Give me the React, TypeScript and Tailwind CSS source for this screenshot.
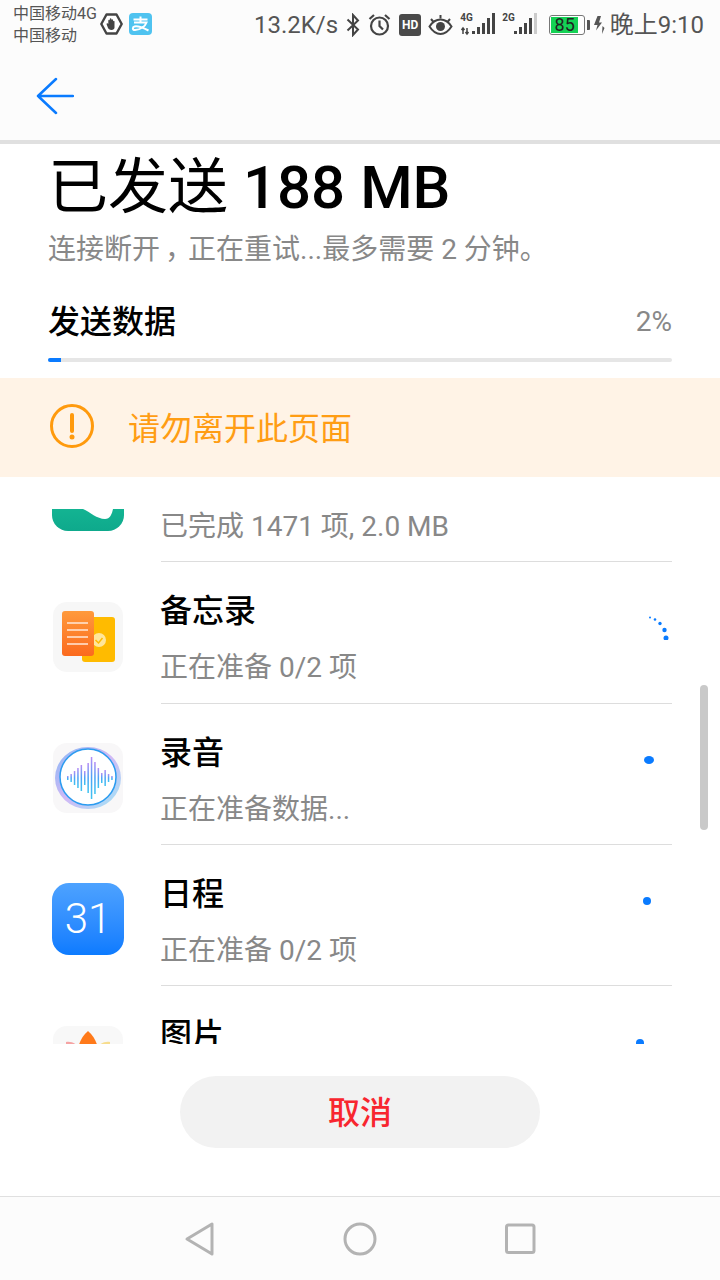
import React from "react";

const FONT = "font-['Roboto','Noto_Sans_CJK_SC',sans-serif]";

function HandBadge() {
  return (
    <svg width="23" height="22" viewBox="0 0 23 22" className="shrink-0">
      <path d="M6.500 1.500h10l5.200 9.500-5.200 9.500h-10L1.300 11z" fill="#fff" stroke="#444" strokeWidth="2.400" strokeLinejoin="round" />
      <path d="M6.500 11c0-1 1.600-1 1.800 0V7.500c0-1 1.500-1 1.500 0V6c0-1 1.600-1 1.600 0v1c0-1 1.600-1 1.600 0v1.500c0-1 1.500-1 1.500 0v6c0 1.500-1.200 2.500-3 2.500-2 0-3.200-1-3.700-2.500z" fill="#444" />
    </svg>
  );
}

function Alipay() {
  return (
    <svg width="23" height="22" viewBox="0 0 23 22" className="shrink-0">
      <rect width="23" height="22" rx="4" fill="#4fc3f0" />
      <path d="M11.500 3.500v5M4.500 6.500h14M5 9.500h12.500c-1.500 4-5 7-11.500 7.500-3 .2-2.500-3-.5-3.500 4-1 9 1.500 14 4" fill="none" stroke="#fff" strokeWidth="2" />
    </svg>
  );
}

function Bluetooth() {
  return (
    <svg width="14" height="24" viewBox="0 0 14 24" className="shrink-0">
      <path d="M1.500 6.500 12 16.500 7 22V2l5 5.500L1.500 17.500" fill="none" stroke="#444" strokeWidth="2" />
    </svg>
  );
}

function Alarm() {
  return (
    <svg width="23" height="24" viewBox="0 0 23 24" className="shrink-0">
      <circle cx="11.500" cy="13" r="8.500" fill="none" stroke="#444" strokeWidth="2.200" />
      <path d="M11.500 7.500V13l3.500 3.500M1.500 6 6 2M21.500 6 17 2" fill="none" stroke="#444" strokeWidth="2.200" />
    </svg>
  );
}

function HdBadge() {
  return (
    <div className="w-[22px] h-[22px] rounded-[3px] bg-[#4a4a4a] flex items-center justify-center text-white text-[12px] leading-none font-bold shrink-0">
      HD
    </div>
  );
}

function Eye() {
  return (
    <svg width="25" height="22" viewBox="0 0 25 22" className="shrink-0">
      <path d="M1.500 12.500C5 7 9 5.500 12.500 5.500S20 7 23.500 12.500C20 18 16 20 12.500 20S5 18 1.500 12.500z" fill="none" stroke="#444" strokeWidth="2" />
      <circle cx="12.500" cy="12.500" r="4.500" fill="#444" />
      <path d="M3 5l2.500 3M12.500 1v3.500M22 5l-2.500 3" stroke="#444" strokeWidth="2" />
    </svg>
  );
}

function Signal({ label, arrows, dim }: { label: string; arrows?: boolean; dim?: boolean }) {
  const bars = [3, 7, 11, 16, 21];
  return (
    <div className="relative w-[36px] h-[24px] shrink-0">
      <svg width="36" height="24" viewBox="0 0 36 24" className="absolute inset-0">
        {bars.map((h, i) => (
          <rect key={i} x={12 + i * 5} y={21 - h} width="3" height={h} fill={dim && i === 4 ? "#cccccc" : "#444"} />
        ))}
        {arrows && <path d="M3 15v6M1.500 17 3 15l1.500 2M7 15v6M5.500 19 7 21l1.500-2" fill="none" stroke="#444" strokeWidth="1.500" />}
      </svg>
      <span className="absolute left-0 top-0 text-[10px] leading-[10px] font-bold text-[#444]">{label}</span>
    </div>
  );
}

function Battery() {
  return (
    <div className="flex items-center gap-[2px] shrink-0">
      <div className="w-[36px] h-[20px] rounded-[3px] border border-[#777] p-[1px] bg-white">
        <div className="w-[27px] h-full bg-[#14d255] text-center text-[18px] leading-[16px] text-[#222]">85</div>
      </div>
      <div className="w-[3px] h-[10px] rounded-r-[1px] bg-[#555]" />
    </div>
  );
}

function Bolt() {
  return (
    <svg width="12" height="20" viewBox="0 0 12 20" className="shrink-0">
      <path d="M4.500 1 1 10h3.500L3 15.500 9 7.500H6L8 1z" fill="#555" />
      <path d="M9.500 11 9 19l2.500-6z" fill="#555" />
    </svg>
  );
}

function StatusBar() {
  return (
    <div className="h-[50px] pl-[13px] pr-[16px] flex items-center text-[#555]">
      <div className="w-[87px] text-[16px] leading-[22px] shrink-0 whitespace-nowrap">
        <div>中国移动4G</div>
        <div>中国移动</div>
      </div>
      <div className="flex items-center gap-[6px] -mt-[2px]">
        <HandBadge />
        <Alipay />
      </div>
      <span className="ml-[102px] text-[24px] leading-none">13.2K/s</span>
      <div className="ml-[8px] flex items-center">
        <Bluetooth />
        <div className="ml-[8px]"><Alarm /></div>
        <div className="ml-[8px]"><HdBadge /></div>
        <div className="ml-[7px]"><Eye /></div>
        <div className="ml-[7px]"><Signal label="4G" arrows /></div>
        <div className="ml-[6px]"><Signal label="2G" dim /></div>
        <div className="ml-[11px]"><Battery /></div>
        <div className="ml-[3px]"><Bolt /></div>
      </div>
      <span className="ml-auto text-[24px] leading-none">晚上9:10</span>
    </div>
  );
}

function MemoIcon() {
  return (
    <svg width="72" height="72" viewBox="0 0 72 72">
      <defs>
        <linearGradient id="memo" x1="0" y1="0" x2="0" y2="1">
          <stop offset="0" stopColor="#ff9a3c" />
          <stop offset="1" stopColor="#fb6a1e" />
        </linearGradient>
      </defs>
      <rect x="1" y="0" width="70" height="70" rx="14" fill="#f7f7f7" />
      <rect x="30" y="15" width="33" height="45" rx="3" fill="#ffbb00" />
      <circle cx="47" cy="38" r="7" fill="#ffe69a" />
      <path d="M43.500 38l3 3 4-5" fill="none" stroke="#ffbb00" strokeWidth="1.500" />
      <rect x="10" y="9" width="32" height="45" rx="3" fill="url(#memo)" />
      <path d="M15 21h21M15 28h21M15 35h21M15 42h21" stroke="#ffe8d8" strokeWidth="1.500" />
    </svg>
  );
}

function RecorderIcon() {
  const bars = [4, 8, 14, 20, 26, 14, 30, 42, 32, 20, 10, 16, 8, 4];
  return (
    <svg width="72" height="72" viewBox="0 0 72 72" className="-mt-[1px]">
      <defs>
        <linearGradient id="wave" x1="0" y1="0" x2="0" y2="1">
          <stop offset="0" stopColor="#b78cf5" />
          <stop offset="0.5" stopColor="#4aa3f5" />
          <stop offset="1" stopColor="#3fc4f0" />
        </linearGradient>
        <linearGradient id="halo" x1="0" y1="0" x2="1" y2="1">
          <stop offset="0" stopColor="#6fa8f5" />
          <stop offset="0.5" stopColor="#c7a9f5" />
          <stop offset="1" stopColor="#88e3f5" />
        </linearGradient>
      </defs>
      <rect x="1" y="0" width="70" height="70" rx="14" fill="#f8f7f8" />
      <ellipse cx="36" cy="35" rx="33" ry="31" fill="url(#halo)" opacity="0.8" />
      <circle cx="36" cy="34" r="28" fill="#fff" stroke="#2b9cf0" strokeWidth="1.500" />
      {bars.map((h, i) => (
        <rect key={i} x={15 + i * 3.400} y={35 - h / 2} width="1.500" height={h} fill="url(#wave)" />
      ))}
    </svg>
  );
}

function TealIcon() {
  return (
    <svg width="72" height="72" viewBox="0 0 72 72">
      <defs>
        <linearGradient id="teal" x1="0" y1="0" x2="0" y2="1">
          <stop offset="0" stopColor="#1fcb9f" />
          <stop offset="1" stopColor="#0ea98c" />
        </linearGradient>
      </defs>
      <rect width="72" height="70" rx="16" fill="url(#teal)" />
      <path d="M31 40v8c7 3 14 10 22 10 5 0 7-5 8-10V40z" fill="#fff" />
    </svg>
  );
}

function CalendarIcon() {
  return (
    <div className="-mt-[2px] w-[72px] h-[72px] rounded-[17px] bg-gradient-to-b from-[#4da2ff] to-[#0b7bff] flex items-center justify-center text-white text-[42px] font-light leading-none">
      31
    </div>
  );
}

function GalleryIcon() {
  return (
    <svg width="72" height="72" viewBox="0 0 72 72">
      <rect x="1" y="0" width="70" height="70" rx="14" fill="#f8f8f8" />
      <path d="M14 16c6-1 12 2 16 10v10H14z" fill="#f5a3a3" />
      <path d="M58 16c-6-1-12 2-16 10v10h16z" fill="#f7dd8e" />
      <path d="M36 5c7 6 10 14 10 20s-5 10-10 12c-5-2-10-6-10-12s3-14 10-20z" fill="#ff7a1a" />
    </svg>
  );
}

function Spinner() {
  return (
    <svg width="24" height="24" viewBox="0 0 24 24">
      <circle cx="2" cy="1.500" r="1" fill="#0a7bff" />
      <circle cx="7" cy="3.500" r="1.300" fill="#0a7bff" />
      <circle cx="12" cy="7.500" r="1.700" fill="#0a7bff" />
      <circle cx="16.500" cy="14" r="2.200" fill="#0a7bff" />
      <circle cx="18" cy="22" r="2.500" fill="#0a7bff" />
    </svg>
  );
}

function Dot({ wide }: { wide?: boolean }) {
  return <div className={`${wide ? "w-[10px]" : "w-[8px]"} h-[8px] rounded-[50%] bg-[#0a7bff]`} />;
}

const rows = [
  { icon: <TealIcon />, title: "", sub: "已完成 1471 项, 2.0 MB", state: null, stateClass: "" },
  { icon: <MemoIcon />, title: "备忘录", sub: "正在准备 0/2 项", state: <Spinner />, stateClass: "mt-[54px] mr-[0px]" },
  { icon: <RecorderIcon />, title: "录音", sub: "正在准备数据...", state: <Dot wide />, stateClass: "mt-[52px] mr-[18px]" },
  { icon: <CalendarIcon />, title: "日程", sub: "正在准备 0/2 项", state: <Dot />, stateClass: "mt-[52px] mr-[21px]" },
  { icon: <GalleryIcon />, title: "图片", sub: "", state: <Dot />, stateClass: "mt-[53px] mr-[28px]" },
];

function AppRow({ row }: { row: (typeof rows)[number] }) {
  return (
    <div className="h-[141.33px] pl-[52px] pr-[48px] flex">
      <div className="w-[72px] pt-[40px] shrink-0">{row.icon}</div>
      <div className="ml-[37px] flex-1 flex justify-between border-b border-[#dddddd]">
        <div className="-ml-[1px]">
          <div className="h-[34px] mt-[31px] text-[32px] leading-[36px] font-medium text-black">{row.title}</div>
          <div className="mt-[23px] text-[28px] leading-[36px] text-[#888888]">{row.sub}</div>
        </div>
        {row.state && <div className={row.stateClass}>{row.state}</div>}
      </div>
    </div>
  );
}

export default function App() {
  return (
    <div className={`relative w-[720px] h-[1280px] overflow-hidden bg-white flex flex-col ${FONT}`}>
      <div className="bg-[#fcfcfc] border-b-4 border-[#e0e0e0]">
        <StatusBar />
        <div className="h-[90px] pl-[36px] flex items-center pb-[1px]">
          <svg width="38" height="38" viewBox="0 0 38 38" className="mt-[2px]">
            <path d="M37 19H2M20 2 2 19l18 17" fill="none" stroke="#0a7bff" strokeWidth="2.500" strokeLinecap="round" strokeLinejoin="round" />
          </svg>
        </div>
      </div>

      <div className="px-[48px]">
        <h1 className="mt-[9px] text-[60px] leading-[70px] font-medium text-black">
          <span className="font-normal">已发送</span> 188 MB
        </h1>
        <p className="mt-[10px] text-[28px] leading-[34px] text-[#888888]">
          连接断<span className="tracking-[5px]">开</span><span className="tracking-[-5px]">，</span>正在重试...最多需要 2 分钟。
        </p>
        <div className="mt-[35px] flex items-center justify-between">
          <span className="text-[32px] leading-[40px] font-medium text-black">发送数据</span>
          <span className="text-[28px] leading-[40px] text-[#888888]">2%</span>
        </div>
        <div className="mt-[16px] h-[4px] bg-[#e6e6e6] rounded-full overflow-hidden">
          <div className="w-[13px] h-full bg-[#0a7bff]" />
        </div>
      </div>

      <div className="mt-[16px] h-[99px] bg-[#fff3e6] pl-[50px] flex items-center">
        <svg width="44" height="44" viewBox="0 0 44 44" className="-mt-[3px]">
          <circle cx="22" cy="22" r="20.500" fill="none" stroke="#ff9a0d" strokeWidth="3" />
          <path d="M22 11v16" stroke="#ff9a0d" strokeWidth="4" strokeLinecap="round" />
          <circle cx="22" cy="33" r="2.500" fill="#ff9a0d" />
        </svg>
        <span className="ml-[34px] mt-[2px] text-[32px] leading-none text-[#ff9d14]">请勿离开此页面</span>
      </div>

      <div className="mt-[32px] h-[535px] overflow-hidden">
        <div className="-mt-[88px]">
          {rows.map((row, i) => (
            <AppRow key={i} row={row} />
          ))}
        </div>
      </div>

      <div className="flex-1 flex justify-center pt-[32px]">
        <button className="w-[360px] h-[72px] pt-[1px] rounded-full bg-[#f2f2f2] text-[32px] font-medium text-[#f8262f]">取消</button>
      </div>

      <div className="h-[84px] bg-[#fcfcfc] border-t border-[#e0e0e0] flex items-center justify-center gap-[128px]">
        <svg width="32" height="36" viewBox="0 0 32 36">
          <path d="M29 3v30L4 18z" fill="none" stroke="#b3b3b3" strokeWidth="3" strokeLinejoin="round" />
        </svg>
        <svg width="34" height="34" viewBox="0 0 34 34">
          <circle cx="17" cy="17" r="15" fill="none" stroke="#b3b3b3" strokeWidth="3" />
        </svg>
        <svg width="32" height="32" viewBox="0 0 32 32">
          <rect x="1.500" y="2" width="27.500" height="27.500" rx="2" fill="none" stroke="#b3b3b3" strokeWidth="3" />
        </svg>
      </div>

      <div className="absolute left-[700px] top-[685px] w-[8px] h-[145px] rounded-full bg-[#c9c9c9]" />
    </div>
  );
}
